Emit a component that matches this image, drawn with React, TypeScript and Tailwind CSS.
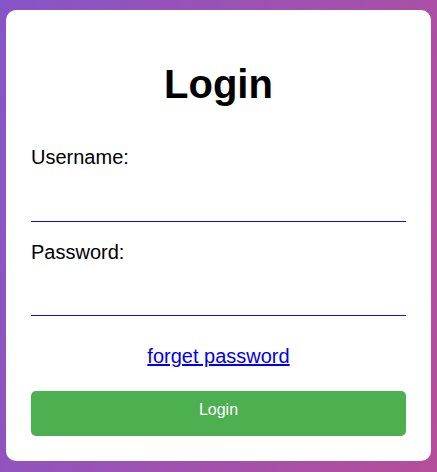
export default function App() {
  return (
    <div className="h-[472px] w-full bg-linear-[105deg] from-[#8655c8] to-[#b64e9a] px-[6px] pt-[10px] font-['Liberation_Sans',Arial,sans-serif]">
      <div className="flex h-[451px] w-[425px] flex-col rounded-[10px] bg-white px-[25px] pt-[51px] pb-[25px]">
        <h1 className="text-center text-[40px] leading-[46px] font-bold text-black">Login</h1>
        <label className="mt-[39px] text-[20px] leading-[23px] text-black">Username:</label>
        <input
          type="text"
          className="h-[53px] w-full border-b border-[#1212c8] bg-transparent text-[20px] outline-none"
        />
        <label className="mt-[19px] text-[20px] leading-[23px] text-black">Password:</label>
        <input
          type="password"
          className="h-[53px] w-full border-b border-[#1212c8] bg-transparent text-[20px] outline-none"
        />
        <div className="mt-[29px] text-center text-[20px] leading-[23px]">
          <a href="#" className="text-[#0000ee] underline">forget password</a>
        </div>
        <button className="mt-[23px] flex h-[45px] w-full items-start justify-center rounded-[5px] bg-[#4caf50] pt-[10px] text-[16px] leading-[18px] text-white">
          Login
        </button>
      </div>
    </div>
  );
}
